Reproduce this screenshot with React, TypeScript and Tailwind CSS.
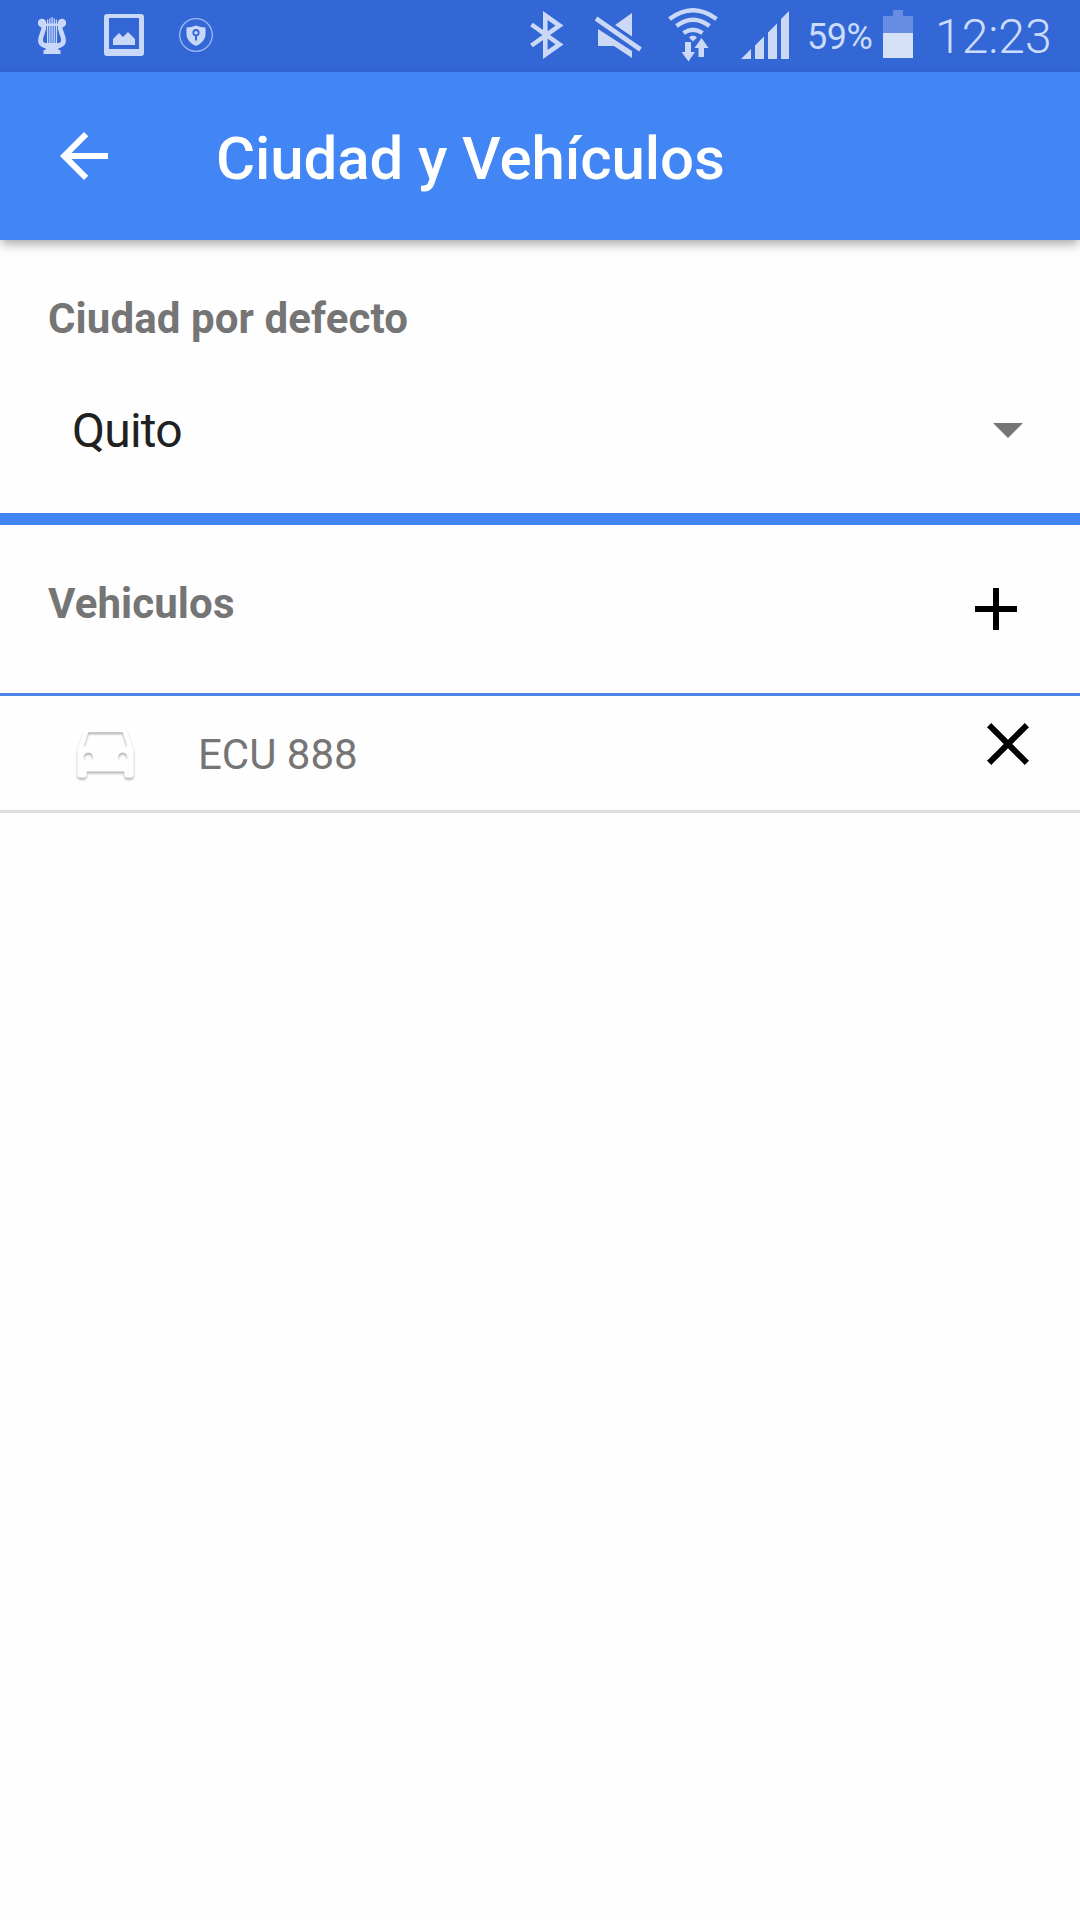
import React from "react";

function Lyre() {
  return (
    <svg className="h-[38px] w-7" viewBox="38 17 28 38" fill="#c9d8f8">
      <circle cx="42" cy="23" r="4.2" />
      <circle cx="62" cy="23" r="4.2" />
      <path
        d="M44 24.500C44.500 32 40.500 34.500 40.500 40.500C40.500 45 45 46.500 52 46.500C59 46.500 63.500 45 63.500 40.500C63.500 34.500 59.500 32 60 24.500"
        fill="none"
        stroke="#c9d8f8"
        strokeWidth="4.800"
      />
      <path d="M44 23.500H60V26H44ZM42 43H62L58.500 48.500V50H60.500V54H43.500V50H45.500V48.500Z" />
      <path d="M47 19.500h1.300v24H47zM49.200 18.500h1.300v25h-1.300zM51.400 17h1.300v26h-1.300zM53.600 18.500h1.300v25h-1.300zM55.800 19.500h1.300v24h-1.300z" />
    </svg>
  );
}

function Picture() {
  return (
    <svg className="h-[42px] w-10" viewBox="104 14 40 42" fill="#c9d8f8">
      <path fillRule="evenodd" d="M107 14H141Q144 14 144 17V53Q144 56 141 56H107Q104 56 104 53V17Q104 14 107 14ZM109 18V49H139V18Z" />
      <path d="M113 45V39L119 33L123 37L128 32L135 39V45Z" />
    </svg>
  );
}

function Shield() {
  return (
    <svg className="h-9 w-9" viewBox="178 17 36 36">
      <circle cx="196" cy="35" r="16.300" fill="none" stroke="#9db9f2" strokeWidth="1.300" />
      <path fill="#c9d8f8" d="M196 25.500Q191 27.500 186.500 27.500V35Q187 42 196 46Q205 42 205.500 35V27.500Q201 27.500 196 25.500Z" />
      <circle cx="196" cy="32.700" r="2.700" fill="none" stroke="#3367d6" strokeWidth="1.800" />
      <path d="M196 35.500V40.500" stroke="#3367d6" strokeWidth="2" />
    </svg>
  );
}

function Bluetooth() {
  return (
    <svg className="h-12 w-[34px]" viewBox="530 11 34 48" fill="none" stroke="#cbd9f6" strokeWidth="4.600">
      <path d="M531.500 24.500L559.500 44.500L545.300 54.500V15.500L559.500 25.500L531.500 45.500" />
    </svg>
  );
}

function Muted() {
  return (
    <svg className="h-[46px] w-12" viewBox="594 13 48 46" fill="#cbd9f6">
      <path d="M632 13V36.500L615 25ZM598 29L632 51V58L614 46H598Z" />
      <path d="M596 18.500L640.500 49.500" stroke="#cbd9f6" strokeWidth="4.600" />
    </svg>
  );
}

function Wifi() {
  return (
    <svg className="h-[54px] w-[50px]" viewBox="668 8 50 54" fill="none" stroke="#cbd9f6" strokeWidth="4.400">
      <path d="M669.500 19Q693 1.500 716.500 19M676.500 26Q693 13.500 709.500 26M683.500 33Q693 26.500 702.500 33" />
      <path fill="#cbd9f6" stroke="none" d="M689 37.500Q693 33.500 697 37.500L693 41.500Z" />
      <path fill="#cbd9f6" stroke="none" d="M685 42H691V52H695L688.500 61.500L681.500 52H685ZM698.500 57H704V48H708.500L701.500 38L694.500 48H698.500Z" />
    </svg>
  );
}

function Signal() {
  return (
    <svg className="h-12 w-12" viewBox="741 11 48 48" fill="#cbd9f6">
      <path d="M741 59L751 49V59ZM755 45.500L764 36.500V59H755ZM768 32.500L777 23.500V59H768ZM781 19L789 11V59H781Z" />
    </svg>
  );
}

function Battery() {
  return (
    <svg className="h-12 w-[30px]" viewBox="883 10 30 48">
      <path fill="#668de2" d="M893 10H903V16H913V33H883V16H893Z" />
      <path fill="#d6e1f7" d="M883 33H913V58H883Z" />
    </svg>
  );
}

function Icon({ d, className }: { d: string; className: string }) {
  return (
    <svg viewBox="0 0 24 24" fill="currentColor" className={`size-[72px] shrink-0 ${className}`}>
      <path d={d} />
    </svg>
  );
}

function Car() {
  return (
    <svg viewBox="0 0 24 24" className="size-[75px] shrink-0 overflow-visible drop-shadow-[0_2px_1.2px_rgba(0,0,0,0.3)]" fill="#fefefe">
      <path d="M18.920 6.010C18.720 5.420 18.160 5 17.500 5h-11c-.660 0-1.210.420-1.420 1.010L3 12v8c0 .550.450 1 1 1h1c.550 0 1-.450 1-1v-1h12v1c0 .550.450 1 1 1h1c.550 0 1-.450 1-1v-8l-2.080-5.990zM6.500 16c-.830 0-1.500-.670-1.500-1.500S5.670 13 6.500 13s1.500.670 1.500 1.500S7.330 16 6.500 16zm11 0c-.830 0-1.500-.670-1.500-1.500s.670-1.500 1.500-1.500 1.500.670 1.500 1.500-.670 1.500-1.500 1.500zM5 11l1.500-4.500h11L19 11H5z" />
    </svg>
  );
}

export default function App() {
  return (
    <div className="flex h-[1920px] w-[1080px] flex-col overflow-hidden bg-[#fefefe] font-['Roboto',sans-serif]">
      <div className="flex h-[72px] shrink-0 items-start bg-[#3367d6] text-[#cbdcfb]">
        <div className="ml-[38px] mt-[17px]"><Lyre /></div>
        <div className="ml-[38px] mt-[14px]"><Picture /></div>
        <div className="ml-[34px] mt-[17px]"><Shield /></div>
        <div className="ml-[316px] mt-[11px]"><Bluetooth /></div>
        <div className="ml-[30px] mt-[13px]"><Muted /></div>
        <div className="ml-[26px] mt-[8px]"><Wifi /></div>
        <div className="ml-[23px] mt-[11px]"><Signal /></div>
        <span className="ml-[18px] w-[76px] whitespace-nowrap text-[36px] font-normal leading-[75px] tracking-[-0.5px]">59%</span>
        <div className="mt-[10px]"><Battery /></div>
        <span className="ml-[22px] whitespace-nowrap text-[48px] font-[350] leading-[73px]">12:23</span>
      </div>

      <header className="relative flex h-[168px] shrink-0 items-center bg-[#4285f4] pl-12 text-white shadow-[0_5px_10px_-1px_rgba(0,0,0,0.34)]">
        <Icon className="" d="M20 11H7.830l5.590-5.590L12 4l-8 8 8 8 1.410-1.410L7.830 13H20v-2z" />
        <h1 className="ml-24 mt-1.5 whitespace-nowrap text-[60px] font-medium leading-[72px] tracking-[-0.1px]">Ciudad y Vehículos</h1>
      </header>

      <section className="flex h-[285px] shrink-0 flex-col border-b-[12px] border-[#4285f4] pt-[54px]">
        <h2 className="ml-12 text-[42px] font-bold leading-[50px] tracking-[0.1px] text-[#757575]">Ciudad por defecto</h2>
        <div className="mt-[49px] flex h-[72px] items-center justify-between pl-[72px] pr-9">
          <span className="mt-1 text-[48px] leading-[56px] tracking-[-0.8px] text-[#212121]">Quito</span>
          <Icon className="text-[#757575]" d="M7 10l5 5 5-5z" />
        </div>
      </section>

      <section className="flex h-[171px] shrink-0 items-start justify-between border-b-[3px] border-[#4a84e8] pl-12 pr-12 pt-12">
        <h2 className="mt-[6px] text-[42px] font-bold leading-[50px] tracking-[0.1px] text-[#757575]">Vehiculos</h2>
        <Icon className="text-black" d="M19 13h-6v6h-2v-6H5v-2h6V5h2v6h6v2z" />
      </section>

      <div className="flex h-[117px] shrink-0 items-start border-b-[3px] border-[#dedede] pl-[68px] pr-9 pt-3">
        <div className="mt-1"><Car /></div>
        <span className="ml-[55px] mt-[22px] grow text-[42px] leading-[50px] text-[#757575]">ECU 888</span>
        <Icon className="text-black" d="M19 6.410L17.590 5 12 10.590 6.410 5 5 6.410 10.590 12 5 17.590 6.410 19 12 13.410 17.590 19 19 17.590 13.410 12z" />
      </div>
    </div>
  );
}
